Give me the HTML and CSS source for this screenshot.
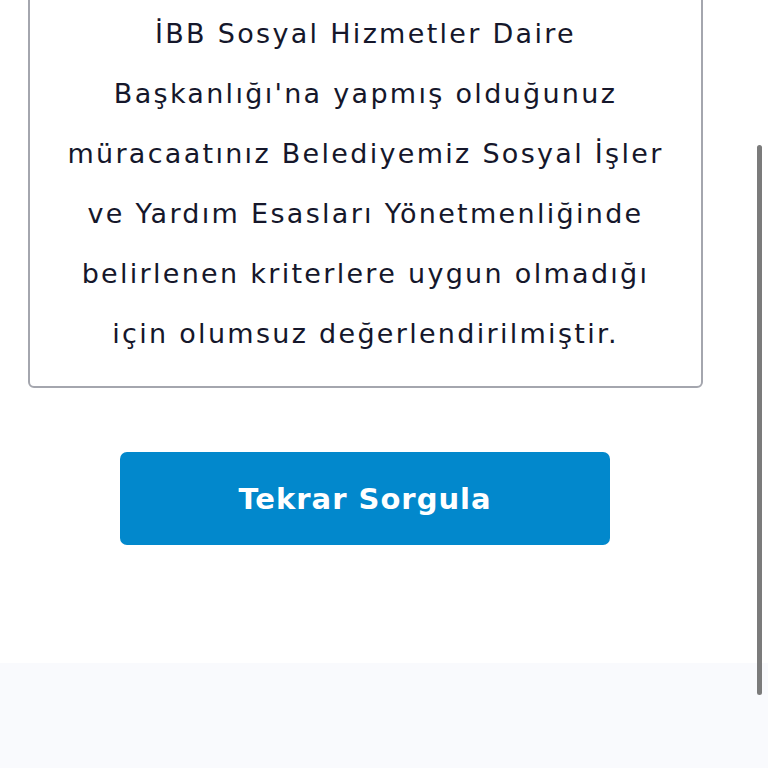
FILE: index.html
```html
<!DOCTYPE html>
<html lang="tr">
<head>
    <meta charset="UTF-8">
    <meta name="viewport" content="width=device-width, initial-scale=1.0">
    <title>Başvuru Sonucu</title>
    <link rel="stylesheet" href="styles.css">
</head>
<body>
    <main class="page">
        <!-- Result message -->
        <div class="result-box">
            <p class="result-text">
                İBB Sosyal Hizmetler Daire<br>
                Başkanlığı'na yapmış olduğunuz<br>
                müracaatınız Belediyemiz Sosyal İşler<br>
                ve Yardım Esasları Yönetmenliğinde<br>
                belirlenen kriterlere uygun olmadığı<br>
                için olumsuz değerlendirilmiştir.
            </p>
        </div>

        <button class="retry-button">Tekrar Sorgula</button>
    </main>

    <footer class="footer"></footer>

    <!-- Scroll indicator -->
    <div class="scroll-thumb"></div>
</body>
</html>
```

FILE: styles.css
```css
/* Basic page styles */
html, body {
    margin: 0;
    padding: 0;
    height: 100%;
    overflow: hidden;
}

body {
    font-family: "DejaVu Sans", "Open Sans", sans-serif;
    background: #ffffff;
    color: #15172b;
    display: flex;
    flex-direction: column;
}

.page {
    width: 675px;
    margin-left: 28px;
    display: flex;
    flex-direction: column;
    align-items: center;
}

/* Result message box */
.result-box {
    box-sizing: border-box;
    width: 100%;
    margin-top: -20px;
    padding: 22px 4px 22px;
    border: 2px solid #a4a6ae;
    border-radius: 6px;
    background: #ffffff;
}

.result-text {
    margin: 0;
    text-align: center;
    font-size: 27px;
    line-height: 60px;
    font-weight: 400;
    letter-spacing: 2.3px;
    color: #15172b;
}

/* Retry button */
.retry-button {
    margin-top: 64px;
    margin-left: -1px;
    width: 490px;
    height: 93px;
    border: none;
    border-radius: 7px;
    background-color: #0288cc;
    color: #ffffff;
    font-family: "DejaVu Sans", "Open Sans", sans-serif;
    font-size: 29px;
    font-weight: 700;
    letter-spacing: 1px;
    cursor: pointer;
}

/* Light footer band */
.footer {
    margin-top: 118px;
    flex: 1;
    background: #f9fafd;
}

/* Scroll thumb overlay */
.scroll-thumb {
    position: absolute;
    left: 757px;
    top: 145px;
    width: 5px;
    height: 550px;
    border-radius: 3px;
    background: #7b7b7b;
}
```
